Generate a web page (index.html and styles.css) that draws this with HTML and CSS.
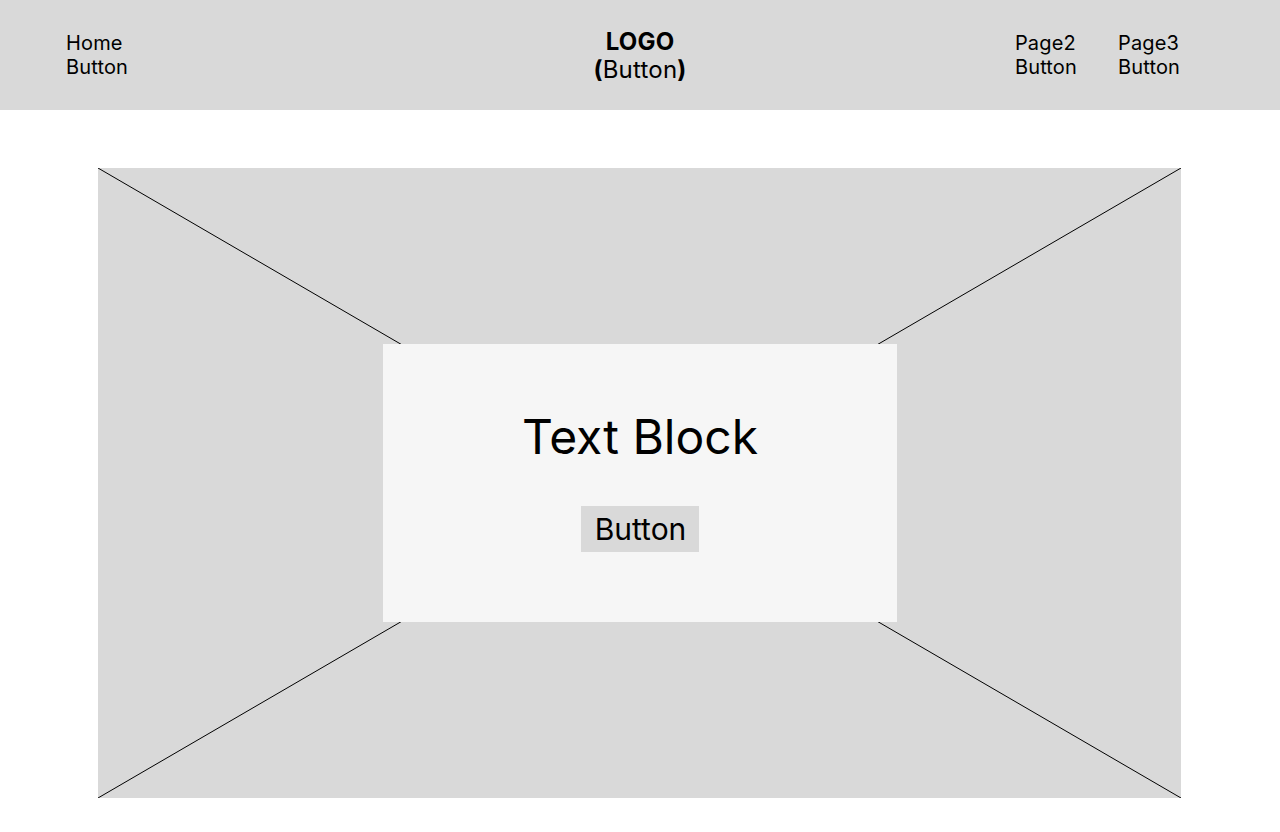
FILE: index.html
```html
<!DOCTYPE html>
<html lang="en">
<head>
<meta charset="utf-8">
<title>Wireframe</title>
<link rel="stylesheet" href="styles.css">
</head>
<body>
<header class="topbar">
  <a class="nav-link">Home<br>Button</a>
  <a class="logo"><strong>LOGO</strong><br><strong>(</strong>Button<strong>)</strong></a>
  <nav class="nav-right">
    <a class="nav-link">Page2<br>Button</a>
    <a class="nav-link">Page3<br>Button</a>
  </nav>
</header>
<main class="content">
  <section class="hero">
    <svg class="hero-lines" viewBox="0 0 1083 630" preserveAspectRatio="none" aria-hidden="true">
      <line x1="0" y1="0" x2="1083" y2="630" stroke="#000" stroke-width="1" vector-effect="non-scaling-stroke"/>
      <line x1="1083" y1="0" x2="0" y2="630" stroke="#000" stroke-width="1" vector-effect="non-scaling-stroke"/>
    </svg>
    <div class="card">
      <h1 class="card-title">Text Block</h1>
      <button class="card-button">Button</button>
    </div>
  </section>
</main>
</body>
</html>
```
FILE: styles.css
```css
* { box-sizing: border-box; }
html, body { margin: 0; padding: 0; background: #ffffff; }
body {
  font-family: Inter, "Noto Sans", "Liberation Sans", sans-serif;
  color: #000;
  width: 1280px;
  height: 832px;
  overflow: hidden;
}
.topbar {
  height: 110px;
  background: #d9d9d9;
  display: grid;
  grid-template-columns: 1fr auto 1fr;
  align-items: center;
  padding: 0 66px;
}
.nav-link {
  font-size: 20px;
  line-height: 24px;
  font-weight: 400;
  justify-self: start;
  letter-spacing: 0.15px;
}
.logo {
  font-size: 24px;
  line-height: 28px;
  text-align: center;
  font-weight: 400;
  letter-spacing: 0.2px;
  padding-top: 2px;
}
.logo strong { font-weight: 700; }
.nav-right {
  justify-self: end;
  display: flex;
  gap: 41px;
  margin-right: 34px;
}
.content {
  padding: 58px 99px 0 98px;
}
.hero {
  position: relative;
  width: 1083px;
  height: 630px;
  background: #d9d9d9;
  display: flex;
  align-items: center;
  justify-content: center;
}
.hero-lines {
  position: absolute;
  inset: 0;
  width: 100%;
  height: 100%;
}
.card {
  position: relative;
  width: 514px;
  height: 278px;
  background: #f6f6f6;
  display: flex;
  flex-direction: column;
  align-items: center;
  padding-top: 64px;
  margin-left: 1px;
}
.card-title {
  margin: 0;
  font-size: 48px;
  line-height: 58px;
  font-weight: 400;
}
.card-button {
  margin-top: 40px;
  font-family: inherit;
  font-size: 30px;
  line-height: 36px;
  padding: 5px 13px 5px 14px;
  border: 0;
  background: #d9d9d9;
  color: #000;
}
```
